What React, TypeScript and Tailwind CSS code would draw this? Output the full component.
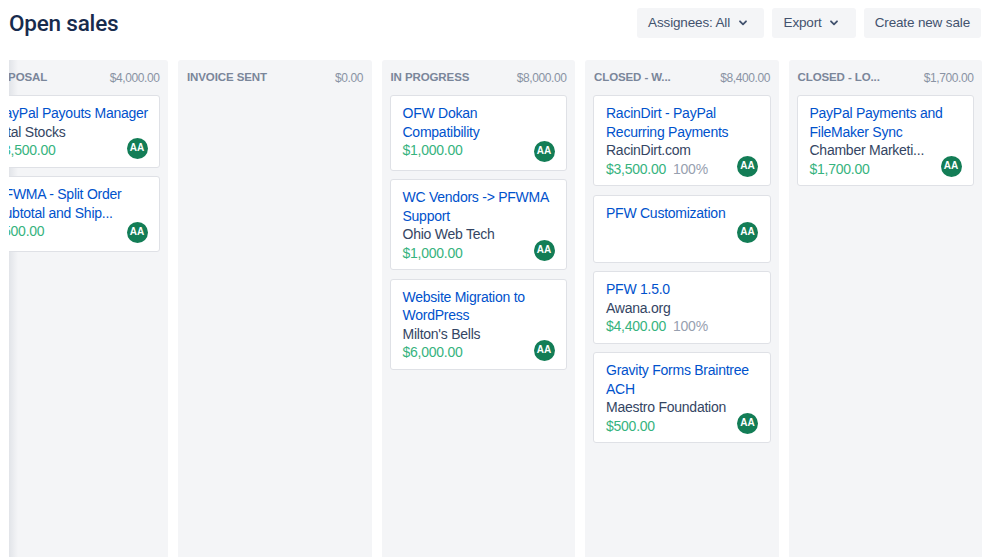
import React from "react";

type Card = {
  title: string[];
  company?: string;
  amount?: string;
  pct?: string;
  avatar?: boolean;
  tall?: boolean;
  extra?: boolean;
};
type Col = { name: string; total: string; cards: Card[] };

const cols: Col[] = [
  {
    name: "PROPOSAL",
    total: "$4,000.00",
    cards: [
      { title: ["PayPal Payouts Manager"], company: "Vital Stocks", amount: "$3,500.00", avatar: true },
      { title: ["PFWMA - Split Order", "Subtotal and Ship..."], amount: "$500.00", avatar: true, extra: true },
    ],
  },
  { name: "INVOICE SENT", total: "$0.00", cards: [] },
  {
    name: "IN PROGRESS",
    total: "$8,000.00",
    cards: [
      { title: ["OFW Dokan", "Compatibility"], amount: "$1,000.00", avatar: true, extra: true },
      { title: ["WC Vendors -> PFWMA", "Support"], company: "Ohio Web Tech", amount: "$1,000.00", avatar: true },
      { title: ["Website Migration to", "WordPress"], company: "Milton's Bells", amount: "$6,000.00", avatar: true },
    ],
  },
  {
    name: "CLOSED - W...",
    total: "$8,400.00",
    cards: [
      { title: ["RacinDirt - PayPal", "Recurring Payments"], company: "RacinDirt.com", amount: "$3,500.00", pct: "100%", avatar: true },
      { title: ["PFW Customization"], avatar: true, tall: true },
      { title: ["PFW 1.5.0"], company: "Awana.org", amount: "$4,400.00", pct: "100%" },
      { title: ["Gravity Forms Braintree", "ACH"], company: "Maestro Foundation", amount: "$500.00", avatar: true },
    ],
  },
  {
    name: "CLOSED - LO...",
    total: "$1,700.00",
    cards: [
      { title: ["PayPal Payments and", "FileMaker Sync"], company: "Chamber Marketi...", amount: "$1,700.00", avatar: true },
    ],
  },
];

function Chevron() {
  return (
    <svg width="8" height="6" viewBox="0 0 8 6" className="shrink-0">
      <path d="M1 1.3 L4 4.3 L7 1.3" fill="none" stroke="#42526e" strokeWidth="1.8" strokeLinecap="round" strokeLinejoin="round" />
    </svg>
  );
}

function DealCard({ c }: { c: Card }) {
  return (
    <div
      className={
        "relative bg-white border border-[#dfe1e6] rounded-[3px] pt-[8px] px-[12px] text-[14px] leading-[18.5px] tracking-[-0.25px] " +
        (c.tall ? "min-h-[68px] pb-[7px]" : c.extra ? "pb-[10px]" : "pb-[7px]")
      }
    >
      {c.title.map((t, i) => (
        <div key={i} className="whitespace-nowrap text-[#0052cc]">
          {t}
        </div>
      ))}
      {c.company && <div className="whitespace-nowrap text-[#344563]">{c.company}</div>}
      {c.amount && (
        <div className="flex gap-[7px] whitespace-nowrap">
          <span className="text-[#36b37e]">{c.amount}</span>
          {c.pct && <span className="text-[#97a0af]">{c.pct}</span>}
        </div>
      )}
      {c.avatar && (
        <div
          className={
            "absolute right-[11.5px] w-[21px] h-[21px] rounded-full bg-[#137d56] text-white text-[10px] tracking-normal font-bold flex items-center justify-center " +
            (c.tall ? "top-[26.5px]" : "bottom-[8px]")
          }
        >
          AA
        </div>
      )}
    </div>
  );
}

export default function App() {
  return (
    <div className="w-[998px] h-[557px] overflow-hidden bg-white font-['Liberation_Sans',Arial,sans-serif]">
      <header className="h-[60px] flex items-start justify-between pl-[9px] pr-[17px] pt-[8px]">
        <h1 className="font-['Roboto',sans-serif] font-medium text-[22.5px] leading-[30px] text-[#172b4d] tracking-[-0.2px]">
          Open sales
        </h1>
        <div className="flex gap-[8px] text-[13.5px] tracking-[-0.15px] text-[#42526e]">
          <button className="h-[29.5px] flex items-center gap-[9px] pl-[11px] pr-[17px] bg-[#f4f5f7] rounded-[3px]">
            <span>Assignees: All</span>
            <Chevron />
          </button>
          <button className="h-[29.5px] flex items-center gap-[8px] pl-[11.5px] pr-[18px] bg-[#f4f5f7] rounded-[3px]">
            <span>Export</span>
            <Chevron />
          </button>
          <button className="h-[29.5px] flex items-center px-[11px] bg-[#f4f5f7] rounded-[3px]">
            <span>Create new sale</span>
          </button>
        </div>
      </header>
      <div className="ml-[9px] overflow-hidden h-[497px]">
        <div className="flex gap-[10px] ml-[-34.5px] h-full">
          {cols.map((col, ci) => (
            <div key={ci} className="relative w-[193.5px] shrink-0 h-[520px] bg-[#f4f5f7] rounded-[3px]">
              {ci === 0 && (
                <div className="absolute left-[34.5px] top-0 bottom-0 w-[9px] bg-linear-to-r from-[rgba(9,30,66,0.08)] to-transparent" />
              )}
              <div className="relative h-[35px] flex items-center justify-between pl-[9px] pr-[8.5px]">
                <span className="text-[11.5px] font-bold text-[#7a869a] tracking-[-0.1px] whitespace-nowrap">{col.name}</span>
                <span className="text-[12px] text-[#8993a4] tracking-[-0.4px]">{col.total}</span>
              </div>
              <div className="flex flex-col gap-[8.5px] px-[8px]">
                {col.cards.map((c, i) => (
                  <DealCard key={i} c={c} />
                ))}
              </div>
            </div>
          ))}
        </div>
      </div>
    </div>
  );
}
